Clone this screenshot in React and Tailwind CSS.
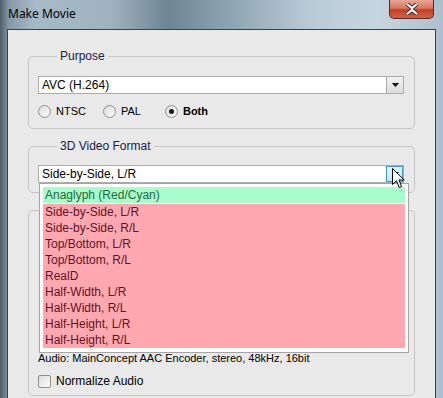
import React from "react";

const font = { fontFamily: '"Liberation Sans", Arial, sans-serif' };

const formats = [
  "Side-by-Side, L/R",
  "Side-by-Side, R/L",
  "Top/Bottom, L/R",
  "Top/Bottom, R/L",
  "RealD",
  "Half-Width, L/R",
  "Half-Width, R/L",
  "Half-Height, L/R",
  "Half-Height, R/L",
];

function Arrow() {
  return (
    <svg width="7" height="4" viewBox="0 0 7 4">
      <path d="M0 0H7L3.5 4Z" fill="#000" />
    </svg>
  );
}

function Combo({ value, hover }) {
  return (
    <div className="flex h-[18px] border border-[#acacac] bg-white">
      <div className="flex-1 pl-[3px] text-[12px] leading-[16px] text-[#000]">{value}</div>
      <div
        className={`flex w-[17px] items-center justify-center border-l ${
          hover
            ? "border-[#3c9ad6] bg-[linear-gradient(#e8f6fd,#bee6fd)] outline outline-1 outline-[#3c9ad6] -outline-offset-1"
            : "border-[#acacac] bg-[linear-gradient(#f2f2f2,#dcdcdc)]"
        }`}
      >
        <Arrow />
      </div>
    </div>
  );
}

function Radio({ checked, label, bold }) {
  return (
    <div className="flex items-center">
      <div className="flex h-[13px] w-[13px] items-center justify-center rounded-full border border-[#8e8f8f] bg-[linear-gradient(135deg,#dcdcdc,#fbfbfb)]">
        {checked && <div className="h-[5px] w-[5px] rounded-full bg-[#1a1a1a]" />}
      </div>
      <span className={`ml-[5px] text-[#000] ${bold ? "font-bold" : ""}`}>{label}</span>
    </div>
  );
}

export default function App() {
  return (
    <div
      className="relative h-[398px] w-[443px] overflow-hidden bg-[linear-gradient(90deg,#4e5c68_0%,#8799a7_2%,#a7bac8_8%,#9fb2c0_25%,#6f8593_38%,#8aa0ae_50%,#b9cbd7_70%,#c7d6e0_85%,#aebfcc_100%)] text-[11px]"
      style={font}
    >
      {/* title bar */}
      <div className="flex h-[29px] items-start">
        <div
          className="pl-[8px] pt-[6px] text-[12px] leading-[16px] text-[#000]"
          style={{ fontFamily: '"Noto Sans", sans-serif' }}
        >
          Make Movie
        </div>
        <div className="ml-auto mr-[9px] flex h-[19px] w-[45px] items-center justify-center rounded-b-[5px] border border-t-0 border-[#5b2a22] bg-[linear-gradient(#e9a596_0%,#d7765f_45%,#c43d22_55%,#d0634a_100%)]">
          <svg width="14" height="12" viewBox="0 0 14 12">
            <path
              d="M2 1L7 5L12 1M2 11L7 7L12 11"
              stroke="#3b2320"
              strokeWidth="4"
              fill="none"
            />
            <path
              d="M2 1L7 5L12 1M2 11L7 7L12 11"
              stroke="#fff"
              strokeWidth="2.2"
              fill="none"
            />
          </svg>
        </div>
      </div>

      {/* client area */}
      <div className="ml-[7px] h-[380px] w-[429px] border border-[#36424c] bg-[#e9e9e9] px-[20px] pt-[20px]">
        <fieldset className="rounded-[5px] border border-[#c5c5c5] pb-[10px] pl-[9px] pr-[10px]">
          <legend className="ml-[19px] px-[3px] text-[12px] leading-[13px] text-[#14224f]">Purpose</legend>
          <div className="mt-[13px]">
            <Combo value="AVC (H.264)" />
          </div>
          <div className="mt-[11px] flex h-[13px] items-center leading-[13px]">
            <Radio label="NTSC" />
            <div className="ml-[17px]">
              <Radio label="PAL" />
            </div>
            <div className="ml-[24px]">
              <Radio label="Both" checked bold />
            </div>
          </div>
        </fieldset>

        <fieldset className="mt-[11px] rounded-[5px] border border-[#c5c5c5] pb-[9px] pl-[9px] pr-[10px]">
          <legend className="ml-[19px] px-[3px] text-[12px] leading-[13px] text-[#14224f]">3D Video Format</legend>
          <div className="mt-[12px]">
            <Combo value="Side-by-Side, L/R" hover />
          </div>
        </fieldset>

        <fieldset className="mt-[17px] rounded-[5px] border border-[#c5c5c5] pb-[7px] pl-[9px] pr-[10px]">
          <div className="h-[141px]" />
          <div className="leading-[13px] text-[#000]">
            Audio: MainConcept AAC Encoder, stereo, 48kHz, 16bit
          </div>
          <div className="mt-[10px] flex h-[13px] items-center leading-[13px]">
            <div className="h-[13px] w-[13px] rounded-[2px] border border-[#8e8f8f] bg-[linear-gradient(135deg,#dcdcdc,#fbfbfb)]" />
            <span className="ml-[5px] text-[12px] text-[#000]">Normalize Audio</span>
          </div>
        </fieldset>
      </div>

      {/* open dropdown list */}
      <div className="absolute left-[39px] top-[183px] h-[170px] w-[370px] border border-[#a5a5a5] bg-white px-[3px] pb-[4px] pt-[3px] text-[12px]">
        <div className="h-[16px] bg-[#a9fdcb] pl-[2px] leading-[16px] text-[#27683d]">
          Anaglyph (Red/Cyan)
        </div>
        <div className="mt-[1px]">
          {formats.map((f) => (
            <div key={f} className="h-[16px] bg-[#ffa8b0] pl-[2px] leading-[16px] text-[#5e1428]">
              {f}
            </div>
          ))}
        </div>
      </div>

      {/* mouse cursor */}
      <svg className="absolute left-[392px] top-[168px]" width="13" height="21" viewBox="0 0 13 21">
        <path
          d="M0.5 0.5V16.5L4.5 12.8L7.2 19.5L9.6 18.5L7 12H12.2Z"
          fill="#fff"
          stroke="#000"
          strokeWidth="1"
          strokeLinejoin="miter"
        />
      </svg>
    </div>
  );
}
